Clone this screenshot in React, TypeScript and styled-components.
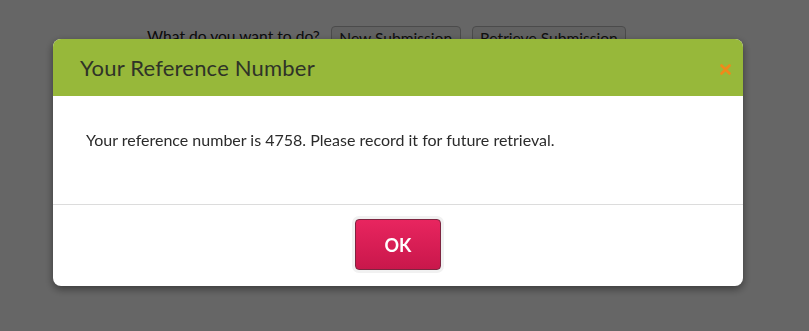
import styled, { createGlobalStyle } from "styled-components";

const GlobalStyle = createGlobalStyle`
  html, body {
    margin: 0;
    padding: 0;
    background: #ffffff;
    font-family: "Lato", "Open Sans", sans-serif;
  }
`;

const App = () => {
  return (
    <>
      <GlobalStyle />
      <Page>
        <Toolbar>
          <Question>What do you want to do?</Question>
          <PageButton>New Submission</PageButton>
          <PageButton>Retrieve Submission</PageButton>
        </Toolbar>
      </Page>
      <Overlay>
        <Modal>
          <Header>
            <Title>Your Reference Number</Title>
            <Close aria-label="close">
              <svg width="11" height="11" viewBox="0 0 11 11">
                <path d="M1.5 1.5 L9.5 9.5 M9.5 1.5 L1.5 9.5" stroke="#f0891a" strokeWidth="2.6" strokeLinecap="round" />
              </svg>
            </Close>
          </Header>
          <Body>
            <Message>Your reference number is 4758. Please record it for future retrieval.</Message>
          </Body>
          <Footer>
            <Halo>
              <OkButton>OK</OkButton>
            </Halo>
          </Footer>
        </Modal>
      </Overlay>
    </>
  );
};

const Page = styled.div`
  width: 809px;
  height: 331px;
`;

const Toolbar = styled.div`
  display: flex;
  align-items: flex-start;
  gap: 11px;
  padding: 26px 0 0 147px;
`;

const Question = styled.span`
  font-size: 15.6px;
  line-height: 20px;
  color: #222;
`;

const PageButton = styled.button`
  height: 30px;
  padding: 1px 7.5px 0;
  display: flex;
  align-items: flex-start;
  font-family: inherit;
  font-size: 15.6px;
  line-height: 20px;
  color: #2a2a2a;
  background: #f2f2f2;
  border: 1px solid #bbb;
  border-radius: 4px;
`;

const Overlay = styled.div`
  position: fixed;
  inset: 0;
  background: rgba(0, 0, 0, 0.6);
`;

const Modal = styled.div`
  width: 690px;
  margin: 39px 0 0 53px;
  background: #fff;
  border-radius: 8px;
  overflow: hidden;
  box-shadow: 0 3px 8px rgba(0, 0, 0, 0.45);
`;

const Header = styled.div`
  height: 57px;
  display: flex;
  align-items: center;
  justify-content: space-between;
  padding: 0 12px 0 27px;
  background: #97b83a;
`;

const Title = styled.h2`
  margin: 0;
  font-size: 22px;
  font-weight: 400;
  color: #2f3328;
  letter-spacing: 0.2px;
`;

const Close = styled.span`
  display: flex;
  margin-top: 3px;
`;

const Body = styled.div`
  height: 108px;
  display: flex;
  align-items: center;
  padding: 0 33px;
  border-bottom: 1px solid #dcdcdc;
`;

const Message = styled.p`
  margin: 0 0 22px;
  font-size: 16px;
  color: #2b2b2b;
`;

const Footer = styled.div`
  height: 81px;
  display: flex;
  justify-content: center;
  padding-top: 11px;
  box-sizing: border-box;
`;

const Halo = styled.div`
  align-self: flex-start;
  padding: 3px;
  border-radius: 7px;
  background: #f1f1f1;
`;

const OkButton = styled.button`
  width: 86px;
  height: 51px;
  font-family: inherit;
  font-size: 18px;
  font-weight: 700;
  color: #fff;
  background: linear-gradient(#e8255f, #c9174b);
  border: 1px solid #7d2540;
  border-radius: 4px;
`;

export default App;
